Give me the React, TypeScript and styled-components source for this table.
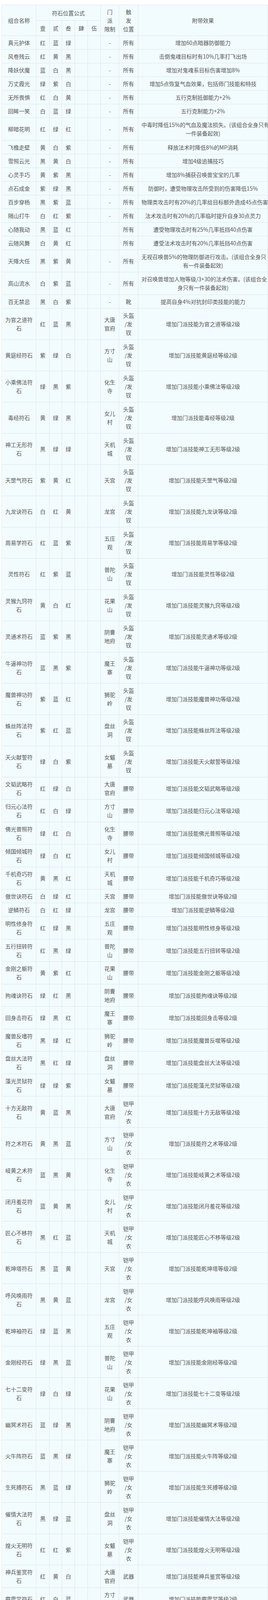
import React from "react";
import styled, { createGlobalStyle } from "styled-components";

const Global = createGlobalStyle`
  html, body { margin: 0; padding: 0; background: #ffffff; }
  body { font-family: "Noto Sans CJK SC", "Noto Sans", sans-serif; }
`;

const Page = styled.div`
  padding: 12px 1px 0 4px;
`;

const Table = styled.table`
  width: 681px;
  table-layout: fixed;
  border-collapse: collapse;
  background: #f2fbfd;
  color: #575757;
  font-family: "Noto Sans CJK SC", "Noto Sans", sans-serif;
  font-size: 14px;
  line-height: 22px;
`;

const Col = styled.col<{ $w: number }>`
  width: ${(p) => p.$w}px;
`;

const Tr = styled.tr<{ $h: number }>`
  height: ${(p) => p.$h}px;
`;

const HeadCell = styled.th`
  border: 1px solid #dde8eb;
  padding: 6px 8px;
  font-weight: normal;
  font-size: 14px;
  line-height: 22px;
  text-align: center;
  vertical-align: middle;
`;

const Cell = styled.td`
  border: 1px solid #dde8eb;
  padding: 6px 8px;
  font-size: 14px;
  line-height: 22px;
  text-align: center;
  vertical-align: middle;
`;

const Line = styled.div`
  height: 22px;
  line-height: 22px;
  white-space: nowrap;
  overflow: visible;
`;

type Row = {
  name: string;
  colors: string;
  sect: string;
  trigger: string[];
  effect: string[];
};

const HELM = ["头盔", "/发", "钗"];
const ARMOR = ["铠甲", "/女", "衣"];

const general: [string, string, string, string[], string[]][] = [
  ["真元护体", "红蓝绿", "-", ["所有"], ["增加60点暗器防御能力"]],
  ["风卷残云", "红黄黑", "-", ["所有"], ["击倒鬼魂目标时有10%几率打飞出场"]],
  ["降妖伏魔", "蓝白黑", "-", ["所有"], ["增加对鬼魂系目标伤害增加8%"]],
  ["万丈霞光", "绿紫白", "-", ["所有"], ["增加5点恢复气血效果，包括师门技能和特技"]],
  ["无所畏惧", "红白黄", "-", ["所有"], ["五行克制抵御能力+2%"]],
  ["回眸一笑", "白蓝绿", "-", ["所有"], ["五行克制能力+2%"]],
  ["柳暗花明", "红绿红", "-", ["所有"], ["中毒时降低15%的气血及魔法损失。(该组合全身只有", "一件装备起效)"]],
  ["飞檐走壁", "黄白紫", "-", ["所有"], ["释放法术时降低8%的MP消耗"]],
  ["雪照云光", "黑黄白", "-", ["所有"], ["增加4级追捕技巧"]],
  ["心灵手巧", "黄紫黑", "-", ["所有"], ["增加8%捕获召唤兽宝宝的几率"]],
  ["点石成金", "紫绿黑", "-", ["所有"], ["防御时，遭受物理攻击所受到的伤害降低15%"]],
  ["百步穿杨", "黑紫蓝", "-", ["所有"], ["物理类攻击时有20%的几率给目标额外造成45点伤害"]],
  ["隔山打牛", "白红紫", "-", ["所有"], ["法术攻击时有20%的几率临时提升自身30点灵力"]],
  ["心随我动", "黑蓝红", "", ["所有"], ["遭受物理攻击时有25%几率抵挡40点伤害"]],
  ["云随风舞", "白黄红", "", ["所有"], ["遭受法术攻击时有20%几率抵挡40点伤害"]],
  ["天降大任", "黑紫黄", "-", ["所有"], ["无视召唤兽5%的物理防御进行攻击。(该组合全身只", "有一件装备起效)"]],
  ["高山流水", "白紫蓝", "-", ["所有"], ["对召唤兽增加人物等级/3+30的法术伤害。(该组合全", "身只有一件装备起效)"]],
  ["百无禁忌", "黑白紫", "-", ["靴"], ["提高自身4%对抗封印类技能的能力"]],
];

const SECTS = [
  "大唐官府", "方寸山", "化生寺", "女儿村", "天机城", "天宫", "龙宫", "五庄观",
  "普陀山", "花果山", "阴曹地府", "魔王寨", "狮驼岭", "盘丝洞", "女魃墓",
];

const helm = [
  "为官之道 红蓝黑", "黄庭经 紫绿白", "小乘佛法 绿黑紫", "毒经 黄绿黑", "神工无形 黑绿绿",
  "天罡气 紫黄红", "九龙诀 白红黄", "周易学 红蓝紫", "灵性 红紫蓝", "灵猴九窍 黄白红",
  "灵通术 蓝紫黑", "牛逼神功 蓝黑紫", "魔兽神功 紫蓝红", "蛛丝阵法 紫红蓝", "天火献誓 绿白紫",
];

const belt = [
  "文韬武略 红绿白", "归元心法 红白绿", "佛光普照 绿红白", "倾国倾城 绿白红", "千机奇巧 黄黑红",
  "傲世诀 白绿红", "逆鳞 白红绿", "明性修身 红绿黑", "五行扭转 红黑绿", "金刚之躯 黄紫红",
  "拘魂诀 绿红黑", "回身击 绿黑红", "魔兽反嗜 黑绿红 魔兽反噬", "盘丝大法 黑红绿", "藻光灵狱 绿绿紫",
];

const armor = [
  "十方无敌 黄蓝黑", "符之术 黄黑蓝", "岐黄之术 蓝黑黄", "闭月羞花 蓝黄黑", "匠心不移 黑红蓝",
  "乾坤塔 黑蓝黄", "呼风唤雨 黑黄蓝", "乾坤袖 绿蓝黑", "金刚经 绿黑蓝", "七十二变 绿白绿",
  "幽冥术 蓝绿黑", "火牛阵 蓝黑绿", "生死搏 黑蓝绿", "催情大法 黑绿蓝", "煌火无明 红红紫",
];

const weapon = [
  "神兵鉴赏 红黄白", "霹雳咒 红白蓝", "诵经 蓝红白", "沉鱼落雁 蓝白红", "攻玉以石 红绿蓝",
  "宁气诀 白蓝红", "破浪诀 白红蓝", "潇湘仙雨 黄蓝白", "五行学说 黄白蓝", "神通广大 红黄绿",
  "尸腐恶 蓝黄白", "牛虱阵 蓝白黄", "阴阳二气诀 白黄蓝", "姊妹相随 白蓝黄",
  "无双一击 红黄紫", "磐龙灭法 红紫黄", "金刚伏魔 蓝红紫", "玉质冰肌 蓝紫红", "擎天之械 紫绿紫",
  "混天术 蓝黄紫", "龙附 黄蓝紫", "修仙术 绿蓝紫", "护法金刚 绿紫蓝", "如意金箍 蓝黑黑",
  "六道轮回 蓝绿紫", "震天诀 蓝紫绿", "狂兽诀 紫绿蓝", "秋波暗送 紫蓝绿", "化神以灵 紫黑蓝",
  "弹指成烬 蓝红红",
];
const weaponSects = [...SECTS.slice(0, 14), ...SECTS, "女魃墓"];

const necklace = [
  "紫薇之术 黄白黑", "神道无念 红黑白", "大慈大悲 白红黑", "香飘兰麝 白黑红", "探奥索隐 蓝红黑",
  "清明自在 黑白红", "龙腾 黑红白", "混元道果 绿白黑", "观音咒 绿黑白", "齐天逞胜 黑黄红",
];

const skillRows = (list: string[], sects: string[], trigger: string[]): Row[] =>
  list.map((entry, i) => {
    const [skill, colors, effectSkill] = entry.split(" ");
    return {
      name: `${skill}符石`,
      colors,
      sect: sects[i],
      trigger,
      effect: [`增加门派技能${effectSkill || skill}等级2级`],
    };
  });

const rows: Row[] = [
  ...general.map(([name, colors, sect, trigger, effect]) => ({ name, colors, sect, trigger, effect })),
  ...skillRows(helm, SECTS, HELM),
  ...skillRows(belt, SECTS, ["腰带"]),
  ...skillRows(armor, SECTS, ARMOR),
  ...skillRows(weapon, weaponSects, ["武器"]),
  ...skillRows(necklace, SECTS, ["项链"]),
];

const chunk = (s: string, n: number): string[] => {
  const chars = Array.from(s);
  const out: string[] = [];
  for (let i = 0; i < chars.length; i += n) out.push(chars.slice(i, i + n).join(""));
  return out;
};

const ROW_H: Record<number, number> = { 1: 35, 2: 57.5, 3: 80 };

const Lines = ({ items }: { items: string[] }) => (
  <>
    {items.map((t, i) => (
      <Line key={i}>{t}</Line>
    ))}
  </>
);

export default function App() {
  return (
    <>
      <Global />
      <Page>
        <Table>
          <colgroup>
            <Col $w={88} />
            <Col $w={34} />
            <Col $w={32} />
            <Col $w={33} />
            <Col $w={33} />
            <Col $w={33} />
            <Col $w={47} />
            <Col $w={49} />
            <Col $w={332} />
          </colgroup>
          <thead>
            <Tr $h={40}>
              <HeadCell rowSpan={2}>
                <Line>组合名称</Line>
              </HeadCell>
              <HeadCell colSpan={5}>
                <Line>符石位置公式</Line>
              </HeadCell>
              <HeadCell rowSpan={2}>
                <Lines items={["门", "派", "限制"]} />
              </HeadCell>
              <HeadCell rowSpan={2}>
                <Lines items={["触", "发", "位置"]} />
              </HeadCell>
              <HeadCell rowSpan={2}>
                <Line>附带效果</Line>
              </HeadCell>
            </Tr>
            <Tr $h={39}>
              {["壹", "贰", "叁", "肆", "伍"].map((t) => (
                <HeadCell key={t}>
                  <Line>{t}</Line>
                </HeadCell>
              ))}
            </Tr>
          </thead>
          <tbody>
            {rows.map((r) => {
              const name = chunk(r.name, 5);
              const sect = r.sect ? chunk(r.sect, 2) : [];
              const lines = Math.max(name.length, sect.length, r.trigger.length, r.effect.length, 1);
              return (
                <Tr key={r.name} $h={ROW_H[lines]}>
                  <Cell>
                    <Lines items={name} />
                  </Cell>
                  {Array.from(r.colors).map((c, i) => (
                    <Cell key={i}>
                      <Line>{c}</Line>
                    </Cell>
                  ))}
                  <Cell />
                  <Cell />
                  <Cell>
                    <Lines items={sect} />
                  </Cell>
                  <Cell>
                    <Lines items={r.trigger} />
                  </Cell>
                  <Cell>
                    <Lines items={r.effect} />
                  </Cell>
                </Tr>
              );
            })}
          </tbody>
        </Table>
      </Page>
    </>
  );
}
